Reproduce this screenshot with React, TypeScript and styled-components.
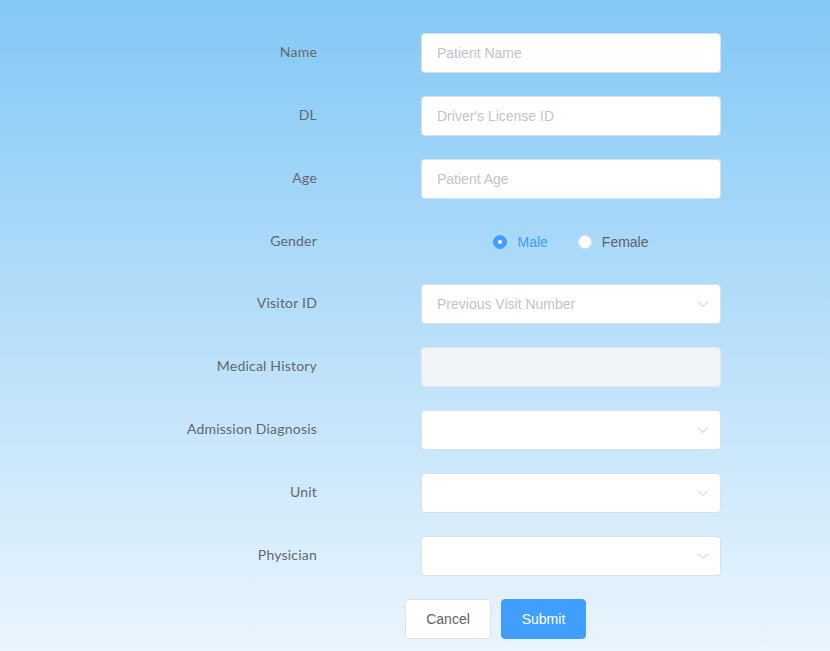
import React from "react";
import styled, { createGlobalStyle } from "styled-components";

const Global = createGlobalStyle`
  html, body { margin: 0; padding: 0; }
  body {
    width: 830px;
    min-height: 651px;
    background: linear-gradient(180deg, #83c8f6 0%, #eaf5fd 100%);
    font-family: "Liberation Sans", Arial, sans-serif;
  }
  * { box-sizing: border-box; }
`;

const Page = styled.div`
  width: 830px;
  height: 651px;
  padding-top: 33px;
  background: linear-gradient(180deg, #83c8f6 0%, #eaf5fd 100%);
`;

const Form = styled.form`
  display: grid;
  grid-template-columns: 317px 300px;
  column-gap: 104px;
  row-gap: 23px;
  width: 721px;
`;

const Label = styled.label<{ $short?: boolean }>`
  height: ${(p) => (p.$short ? "39px" : "40px")};
  padding-bottom: 3px;
  display: flex;
  align-items: center;
  justify-content: flex-end;
  font-family: Lato, "Open Sans", sans-serif;
  font-size: 14px;
  font-weight: 400;
  letter-spacing: 0.2px;
  color: #63676e;
`;

const Field = styled.div<{ $disabled?: boolean }>`
  position: relative;
  height: 40px;
  border-radius: 4px;
  border: 1px solid ${(p) => (p.$disabled ? "#e4e7ed" : "#dcdfe6")};
  background: ${(p) => (p.$disabled ? "#f2f5f8" : "#ffffff")};
  display: flex;
  align-items: center;
`;

const Input = styled.input`
  width: 100%;
  height: 100%;
  border: none;
  outline: none;
  background: transparent;
  padding: 0 15px;
  font-family: "Liberation Sans", Arial, sans-serif;
  font-size: 14px;
  color: #606266;
  &::placeholder { color: #c0c4cc; }
`;

const Arrow = styled.svg`
  position: absolute;
  right: 11px;
  top: 15px;
  width: 12px;
  height: 8px;
`;

const RadioGroup = styled.div`
  height: 39px;
  display: flex;
  align-items: center;
  justify-content: center;
  gap: 30px;
`;

const RadioItem = styled.span<{ $checked?: boolean }>`
  display: inline-flex;
  align-items: center;
  gap: 10px;
  font-family: "Liberation Sans", Arial, sans-serif;
  font-size: 14px;
  font-weight: 500;
  color: ${(p) => (p.$checked ? "#409eff" : "#606266")};
`;

const Dot = styled.span<{ $checked?: boolean }>`
  width: 14px;
  height: 14px;
  border-radius: 50%;
  border: 1px solid ${(p) => (p.$checked ? "#409eff" : "#dcdfe6")};
  background: ${(p) => (p.$checked ? "#409eff" : "#ffffff")};
  display: flex;
  align-items: center;
  justify-content: center;
  &::after {
    content: "";
    width: 4px;
    height: 4px;
    border-radius: 50%;
    background: #ffffff;
    display: ${(p) => (p.$checked ? "block" : "none")};
  }
`;

const ButtonRow = styled.div`
  grid-column: 1 / -1;
  padding-left: 270px;
  display: flex;
  justify-content: center;
  gap: 10px;
`;

const Button = styled.button<{ $primary?: boolean }>`
  height: 40px;
  padding: 0;
  border-radius: 4px;
  font-family: "Liberation Sans", Arial, sans-serif;
  font-size: 14px;
  border: 1px solid ${(p) => (p.$primary ? "#409eff" : "#dcdfe6")};
  background: ${(p) => (p.$primary ? "#409eff" : "#ffffff")};
  color: ${(p) => (p.$primary ? "#ffffff" : "#606266")};
  width: ${(p) => (p.$primary ? "85px" : "86px")};
`;

const Chevron = () => (
  <Arrow viewBox="0 0 12 8">
    <path d="M1 1.5 L6 6.5 L11 1.5" fill="none" stroke="#c0c4cc" strokeWidth="1" />
  </Arrow>
);

const TextField = ({ placeholder }: { placeholder?: string }) => (
  <Field>
    <Input placeholder={placeholder} />
  </Field>
);

const SelectField = ({ placeholder }: { placeholder?: string }) => (
  <Field>
    <Input placeholder={placeholder} readOnly />
    <Chevron />
  </Field>
);

export default function App() {
  return (
    <>
      <Global />
      <Page>
        <Form onSubmit={(e) => e.preventDefault()}>
          <Label>Name</Label>
          <TextField placeholder="Patient Name" />
          <Label>DL</Label>
          <TextField placeholder="Driver's License ID" />
          <Label>Age</Label>
          <TextField placeholder="Patient Age" />
          <Label $short>Gender</Label>
          <RadioGroup>
            <RadioItem $checked>
              <Dot $checked />
              Male
            </RadioItem>
            <RadioItem>
              <Dot />
              Female
            </RadioItem>
          </RadioGroup>
          <Label>Visitor ID</Label>
          <SelectField placeholder="Previous Visit Number" />
          <Label>Medical History</Label>
          <Field $disabled>
            <Input disabled />
          </Field>
          <Label>Admission Diagnosis</Label>
          <SelectField />
          <Label>Unit</Label>
          <SelectField />
          <Label>Physician</Label>
          <SelectField />
          <ButtonRow>
            <Button type="button">Cancel</Button>
            <Button type="submit" $primary>Submit</Button>
          </ButtonRow>
        </Form>
      </Page>
    </>
  );
}
